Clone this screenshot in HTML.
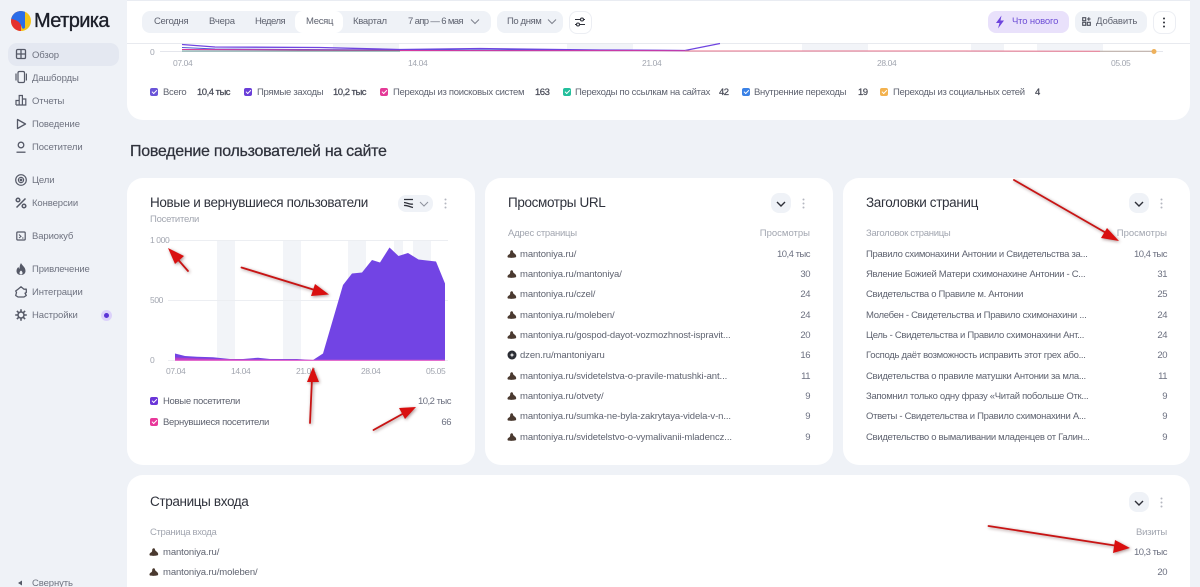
<!DOCTYPE html>
<html lang="ru"><head><meta charset="utf-8"><title>Метрика</title>
<style>
html,body{margin:0;padding:0;width:1200px;height:587px;overflow:hidden;background:#eff2f7;font-family:"Liberation Sans",sans-serif;color:#3c3f4a}
#w{position:relative;width:1200px;height:587px;overflow:hidden;background:#eff2f7}
.t{position:absolute;white-space:nowrap;font-size:9.5px;line-height:14px;height:14px;margin-top:1px}
.r{text-align:right}
.card{position:absolute;background:#fff;border-radius:16px}
.g{color:#a2a6b0;letter-spacing:-.25px}
.a{font-size:8.5px;letter-spacing:-.4px}
.n{color:#5f6370;letter-spacing:-.3px}
.u{letter-spacing:-.1px}
.m{color:#6f7380;letter-spacing:-.1px}
.h{font-size:13.5px;line-height:18px;height:18px;color:#2f323c;letter-spacing:-.36px;margin-top:0}
.s{color:#6c7080;letter-spacing:-.5px}
.k{color:#4a4d59;letter-spacing:-.5px;-webkit-text-stroke:.25px #4a4d59;margin-top:2px}
.l{margin-top:2px}
.b{position:absolute;border-radius:8px}
svg{position:absolute;overflow:visible}
.cb{position:absolute;width:8px;height:8px;border-radius:2px}
.cb::after{content:"";position:absolute;left:2px;top:1.5px;width:3.5px;height:2px;border-left:1px solid #fff;border-bottom:1px solid #fff;transform:rotate(-45deg)}
.fav{position:absolute;width:10px;height:8px}
</style></head><body><div id="w">

<!-- sidebar -->
<svg style="left:11px;top:11px" width="20" height="20" viewBox="0 0 20 20"><defs><clipPath id="lc"><circle cx="10" cy="10" r="10"/></clipPath></defs><g clip-path="url(#lc)"><rect width="20" height="20" fill="#f5c518"/><rect width="10" height="20" fill="#e5312e"/><path d="M0 0H14V16C14 17 13 18 11 17C10 13 8 9 0 8Z" fill="#2b6de8"/><path d="M8 6H14V16C14 17.500 12.500 18 11.500 17.500C10.500 13 9.500 9.500 8 8Z" fill="#2b6de8"/></g></svg>
<div class="t" style="left:34px;top:9px;margin-top:0;font-size:20px;line-height:24px;height:24px;color:#1b1e28;-webkit-text-stroke:.35px #1b1e28;letter-spacing:-.6px">Метрика</div>
<div class="b" style="left:8px;top:43px;width:111px;height:23px;background:#e4e8f1;border-radius:9px"></div>

<svg style="left:14px;top:47px" width="14" height="14" viewBox="0 0 14 14" fill="none" stroke="#555967" stroke-width="1.3"><rect x="2.5" y="2.5" width="9" height="9" rx="1.3"/><path d="M7 2.5v9M2.5 7h9"/></svg>
<svg style="left:14px;top:70px" width="14" height="14" viewBox="0 0 14 14" fill="none" stroke="#555967" stroke-width="1.2"><rect x="4" y="1.5" width="6.5" height="11" rx="1.4"/><path d="M2 3.5v7M12.4 3.5v7"/></svg>
<svg style="left:14px;top:93px" width="14" height="14" viewBox="0 0 14 14" fill="none" stroke="#555967" stroke-width="1.2"><path d="M2 12V7.5H5.2V12M5.2 12V2.5H8.4V12M8.4 12V6H11.8V12H2"/></svg>
<svg style="left:14px;top:117px" width="14" height="14" viewBox="0 0 14 14" fill="none" stroke="#555967" stroke-width="1.3"><path d="M3.5 2.5L11.5 7L3.5 11.5Z" stroke-linejoin="round"/></svg>
<svg style="left:14px;top:140px" width="14" height="14" viewBox="0 0 14 14" fill="none" stroke="#555967" stroke-width="1.3"><circle cx="7" cy="5" r="2.8"/><path d="M2.5 12.2h9"/></svg>
<svg style="left:14px;top:173px" width="14" height="14" viewBox="0 0 14 14" fill="none" stroke="#555967" stroke-width="1.2"><circle cx="7" cy="7" r="5.3"/><circle cx="7" cy="7" r="2.6"/><circle cx="7" cy="7" r=".8" fill="#555967"/></svg>
<svg style="left:14px;top:196px" width="14" height="14" viewBox="0 0 14 14" fill="none" stroke="#555967" stroke-width="1.5"><circle cx="4" cy="4" r="1.8"/><circle cx="10" cy="10" r="1.8"/><path d="M11.5 2.5L2.5 11.5"/></svg>
<svg style="left:14px;top:229px" width="14" height="14" viewBox="0 0 14 14" fill="none" stroke="#555967" stroke-width="1.2"><rect x="2.8" y="3" width="8.4" height="8" rx="1"/><path d="M5 5.5L7 7.5L5 9M8 9h1.5" stroke-width="1"/></svg>
<svg style="left:14px;top:262px" width="14" height="14" viewBox="0 0 14 14" fill="#555967"><path d="M7 1C8 3.5 11.5 5 11.5 9C11.5 11.5 9.5 13 7 13C4.5 13 2.5 11.5 2.5 9C2.5 7 3.5 5.800 4.500 5C4.700 6 5 6.500 5.500 6.700C5.500 4.500 6 2.500 7 1Z"/><path d="M7 8.500C8 9.500 8.500 10 8.500 11C8.500 12 7.800 12.500 7 12.500C6.200 12.500 5.500 12 5.500 11C5.500 10 6 9.500 7 8.500Z" fill="#eff2f7"/></svg>
<svg style="left:14px;top:285px" width="14" height="14" viewBox="0 0 14 14" fill="none" stroke="#555967" stroke-width="1.3"><path d="M7 1.800L10 4.200H12.300V7.500L11 8.200L12.300 10.500L10 12H4L1.700 10.500L2.500 7.500L1.700 6L4 4.200Z" stroke-linejoin="round"/></svg>
<svg style="left:14px;top:308px" width="14" height="14" viewBox="0 0 14 14" fill="none" stroke="#555967"><circle cx="7" cy="7" r="3" stroke-width="1.5"/><path d="M7 1.200v2.500M7 10.300v2.500M1.200 7h2.500M10.300 7h2.500M2.900 2.900l1.800 1.800M9.300 9.300l1.800 1.800M2.900 11.100l1.800-1.800M9.300 4.700l1.800-1.800" stroke-width="1.600"/></svg>
<div style="position:absolute;left:101px;top:310px;width:11px;height:11px;border-radius:50%;background:#dcd2fa"></div>
<div style="position:absolute;left:104px;top:313px;width:5px;height:5px;border-radius:50%;background:#5b33d6"></div>
<svg style="left:17px;top:579px" width="7" height="8" viewBox="0 0 7 8" fill="#555967"><path d="M1 4L5 1.500V6.500Z"/></svg>

<div class="t m" style="left:32px;top:48px">Обзор</div>
<div class="t m" style="left:32px;top:71px">Дашборды</div>
<div class="t m" style="left:32px;top:94px">Отчеты</div>
<div class="t m" style="left:32px;top:117px">Поведение</div>
<div class="t m" style="left:32px;top:140px">Посетители</div>
<div class="t m" style="left:32px;top:173px">Цели</div>
<div class="t m" style="left:32px;top:196px">Конверсии</div>
<div class="t m" style="left:32px;top:229px">Вариокуб</div>
<div class="t m" style="left:32px;top:262px">Привлечение</div>
<div class="t m" style="left:32px;top:285px">Интеграции</div>
<div class="t m" style="left:32px;top:308px">Настройки</div>
<div class="t m" style="left:32px;top:576px">Свернуть</div>

<!-- top card -->
<div class="card" style="left:127px;top:-20px;width:1063px;height:140px"></div>
<div style="position:absolute;left:127px;top:0;width:1063px;height:1px;background:#e9ecf2"></div>
<div style="position:absolute;left:127px;top:43px;width:1063px;height:1px;background:#e8eaef"></div>

<div class="b" style="left:142px;top:11px;width:349px;height:22px;background:#eff2f7"></div>
<div class="b" style="left:295px;top:11px;width:48px;height:22px;background:#fff"></div>
<div class="t n" style="left:154px;top:14px">Сегодня</div>
<div class="t n" style="left:209px;top:14px;letter-spacing:-.2px">Вчера</div>
<div class="t n" style="left:255px;top:14px;letter-spacing:-.5px">Неделя</div>
<div class="t n" style="left:306px;top:14px">Месяц</div>
<div class="t n" style="left:353px;top:14px">Квартал</div>
<div class="t n" style="left:408px;top:14px;letter-spacing:-.65px">7 апр — 6 мая</div>
<svg style="left:470px;top:18px" width="10" height="7" fill="none" stroke="#7d818d" stroke-width="1"><path d="M1 1.500L5 5.500L9 1.500"/></svg>
<div class="b" style="left:497px;top:11px;width:66px;height:22px;background:#eff2f7"></div>
<div class="t n" style="left:507px;top:14px;letter-spacing:-.4px">По дням</div>
<svg style="left:547px;top:18px" width="10" height="7" fill="none" stroke="#7d818d" stroke-width="1"><path d="M1 1.500L5 5.500L9 1.500"/></svg>
<div class="b" style="left:569px;top:11px;width:21px;height:21px;border:1px solid #eceef3;background:#fff"></div>
<svg style="left:574px;top:16px" width="12" height="12" viewBox="0 0 12 12" fill="none" stroke="#2e3039" stroke-width="1.1"><path d="M1 3.500H6.500M9.500 3.500H11M1 8.500H2.500M5.500 8.500H11"/><circle cx="8" cy="3.500" r="1.500"/><circle cx="4" cy="8.500" r="1.500"/></svg>

<div class="b" style="left:988px;top:11px;width:81px;height:22px;background:#e9e1fb"></div>
<svg style="left:995px;top:15px" width="10" height="14" viewBox="0 0 10 14" fill="#6e45dd"><path d="M6.500 .5L1 8H4.500L3 13.500L9 5.500H5.500Z"/></svg>
<div class="t" style="left:1012px;top:14px;color:#6e4fd6;letter-spacing:-.15px">Что нового</div>
<div class="b" style="left:1075px;top:11px;width:72px;height:22px;background:#eff2f7"></div>
<svg style="left:1082px;top:17px" width="9" height="9" viewBox="0 0 9 9" fill="none" stroke="#4a4d59" stroke-width="1.1"><rect x=".7" y=".7" width="3" height="3"/><rect x=".7" y="5.300" width="3" height="3"/><rect x="5.300" y="5.300" width="3" height="3"/><path d="M6.800 .3v3.500M5 2h3.600"/></svg>
<div class="t n" style="left:1096px;top:14px;letter-spacing:-.1px">Добавить</div>
<div class="b" style="left:1153px;top:11px;width:21px;height:21px;border:1px solid #eceef3;background:#fff"></div>
<svg style="left:1162px;top:17px" width="4" height="11" fill="#2e3039"><circle cx="2" cy="1.500" r="1"/><circle cx="2" cy="5.500" r="1"/><circle cx="2" cy="9.500" r="1"/></svg>

<svg style="left:0;top:0" width="1200" height="70" viewBox="0 0 1200 70" fill="none">
<g fill="#f2f4f8"><rect x="333" y="44" width="66" height="8"/><rect x="567" y="44" width="66" height="8"/><rect x="802" y="44" width="66" height="8"/><rect x="971" y="44" width="33" height="8"/><rect x="1037" y="44" width="66" height="8"/></g>
<path d="M160 51.500H1163" stroke="#e4e6ec"/>
<path d="M182 47.500L215 49L400 50L560 50L685 50.500" stroke="#4f5bd5" stroke-width="1"/>
<path d="M182 44.500L215 47L320 47.500L400 49.500L480 48.500L600 50L685 50.500L720 43.500" stroke="#6f45e0" stroke-width="1.300"/>
<path d="M182 49.500L300 50L400 50.500L685 50.700" stroke="#d6399f" stroke-width="1"/>
<path d="M182 51H400" stroke="#3a7f7a" stroke-width=".8"/>
<path d="M685 51H960L1100 51.300" stroke="#e8718a" stroke-width="1"/>
<path d="M1100 51.300H1154" stroke="#b9a9a0" stroke-width="1"/>
<circle cx="1154" cy="51.500" r="2.500" fill="#eeb15c"/>
</svg>
<div class="t g a" style="left:150px;top:44px">0</div>
<div class="t g a" style="left:173px;top:55px">07.04</div>
<div class="t g a" style="left:408px;top:55px">14.04</div>
<div class="t g a" style="left:642px;top:55px">21.04</div>
<div class="t g a" style="left:877px;top:55px">28.04</div>
<div class="t g a" style="left:1111px;top:55px">05.05</div>

<div class="cb" style="left:150px;top:88px;background:#6a55d8"></div>
<div class="t n l" style="left:163px;top:84px">Всего</div>
<div class="t k" style="left:197px;top:84px">10,4 тыс</div>
<div class="cb" style="left:244px;top:88px;background:#6a3ed8"></div>
<div class="t n l" style="left:257px;top:84px">Прямые заходы</div>
<div class="t k" style="left:333px;top:84px">10,2 тыс</div>
<div class="cb" style="left:380px;top:88px;background:#e43a97"></div>
<div class="t n l" style="left:393px;top:84px">Переходы из поисковых систем</div>
<div class="t k" style="left:535px;top:84px">163</div>
<div class="cb" style="left:563px;top:88px;background:#23bf9c"></div>
<div class="t n l" style="left:575px;top:84px">Переходы по ссылкам на сайтах</div>
<div class="t k" style="left:719px;top:84px">42</div>
<div class="cb" style="left:742px;top:88px;background:#3b82e6"></div>
<div class="t n l" style="left:754px;top:84px">Внутренние переходы</div>
<div class="t k" style="left:858px;top:84px">19</div>
<div class="cb" style="left:880px;top:88px;background:#f3b24f"></div>
<div class="t n l" style="left:893px;top:84px">Переходы из социальных сетей</div>
<div class="t k" style="left:1035px;top:84px">4</div>

<div class="t" style="left:130px;top:141px;font-size:16px;line-height:20px;height:20px;color:#2f323c;-webkit-text-stroke:.25px #2f323c;letter-spacing:-.28px">Поведение пользователей на сайте</div>

<!-- card 1 -->
<div class="card" style="left:127px;top:178px;width:348px;height:287px"></div>
<div class="t h" style="left:150px;top:194px">Новые и вернувшиеся пользователи</div>
<div class="t g" style="left:150px;top:212px">Посетители</div>
<div class="b" style="left:398px;top:195px;width:35px;height:17px;background:#eff2f7"></div>
<svg style="left:403px;top:198px" width="11" height="11" viewBox="0 0 11 11" fill="none" stroke="#2e3039" stroke-width="1.300"><path d="M1 1.500H10M1 4.500C4 4.500 7 7 10 6M1 7.500C4 7 7 9 10 9.500"/></svg>
<svg style="left:419px;top:201px" width="10" height="6" fill="none" stroke="#8d919c" stroke-width="1"><path d="M1 1L5 5L9 1"/></svg>
<svg style="left:444px;top:198px" width="3" height="11" fill="#b4b7c0"><circle cx="1.500" cy="1.500" r="1"/><circle cx="1.500" cy="5.500" r="1"/><circle cx="1.500" cy="9.500" r="1"/></svg>
<svg style="left:0;top:0" width="1200" height="587" viewBox="0 0 1200 587" fill="none">
<g fill="#f2f4f8"><rect x="217" y="240" width="18" height="120"/><rect x="283" y="240" width="18" height="120"/><rect x="348" y="240" width="18" height="120"/><rect x="394" y="240" width="9" height="120"/><rect x="413" y="240" width="18" height="120"/></g>
<path d="M168 240.500H448M168 300.500H448M168 360.500H448" stroke="#eceef2"/>
<path d="M175 353.500L185 356L197 356.700L213 357.300L230 359L243 359L258 357.700L270 359L297 359L313 360L323 353.500L343 285L352 273.500L362 272.500L372 260L380 262.500L389.500 247.500L398.500 256L408 253L418.500 259.500L427 260.500L436 261.500L445 283.500V360H175Z" fill="#7244e4"/>
<path d="M175 357.500L200 358.500L250 359.500L313 360V360H175Z" fill="#b43fc8"/>
<path d="M175 360.300H445" stroke="#e25bc8" stroke-width="1.200"/>
</svg>
<div class="t g a" style="left:150px;top:232px">1 000</div>
<div class="t g a" style="left:150px;top:292px">500</div>
<div class="t g a" style="left:150px;top:352px">0</div>
<div class="t g a" style="left:166px;top:363px">07.04</div>
<div class="t g a" style="left:231px;top:363px">14.04</div>
<div class="t g a" style="left:296px;top:363px">21.04</div>
<div class="t g a" style="left:361px;top:363px">28.04</div>
<div class="t g a" style="left:426px;top:363px">05.05</div>
<div class="cb" style="left:150px;top:397px;background:#6a35d8"></div>
<div class="t n" style="left:163px;top:394px">Новые посетители</div>
<div class="t s r" style="right:749px;top:394px">10,2 тыс</div>
<div class="cb" style="left:150px;top:418px;background:#e8389a"></div>
<div class="t n" style="left:163px;top:415px">Вернувшиеся посетители</div>
<div class="t s r" style="right:749px;top:415px">66</div>

<!-- card 2 -->
<div class="card" style="left:485px;top:178px;width:348px;height:287px"></div>
<div class="t h" style="left:508px;top:194px">Просмотры URL</div>
<div class="b" style="left:771px;top:193px;width:20px;height:20px;background:#eff2f7"></div>
<svg style="left:776px;top:201px" width="10" height="6" fill="none" stroke="#2e3039" stroke-width="1.400"><path d="M1 1L5 5L9 1"/></svg>
<svg style="left:802px;top:198px" width="3" height="11" fill="#b4b7c0"><circle cx="1.500" cy="1.500" r="1"/><circle cx="1.500" cy="5.500" r="1"/><circle cx="1.500" cy="9.500" r="1"/></svg>
<div class="t g" style="left:508px;top:226px">Адрес страницы</div>
<div class="t g r" style="right:390px;top:226px;letter-spacing:0">Просмотры</div>

<svg width="0" height="0" style="position:absolute"><defs><path id="f" d="M4 0.500C5 0 6 .5 6 1.500C6 2.300 6.500 2.800 7.500 3.500C9 4.500 9.500 6 9 7C8 8 2 8 1 7.500C0 7 .5 5 2 4.500C3 4 3.200 3 3.200 2C3.200 1.300 3.500 .8 4 .5Z" fill="#4a3a30"/></defs></svg>

<svg class="fav" style="left:507px;top:250px"><use href="#f"/></svg><div class="t n u" style="left:520px;top:247px">mantoniya.ru/</div><div class="t s r" style="right:390px;top:247px">10,4 тыс</div>
<svg class="fav" style="left:507px;top:270px"><use href="#f"/></svg><div class="t n u" style="left:520px;top:267px">mantoniya.ru/mantoniya/</div><div class="t s r" style="right:390px;top:267px">30</div>
<svg class="fav" style="left:507px;top:291px"><use href="#f"/></svg><div class="t n u" style="left:520px;top:287px">mantoniya.ru/czel/</div><div class="t s r" style="right:390px;top:287px">24</div>
<svg class="fav" style="left:507px;top:311px"><use href="#f"/></svg><div class="t n u" style="left:520px;top:308px">mantoniya.ru/moleben/</div><div class="t s r" style="right:390px;top:308px">24</div>
<svg class="fav" style="left:507px;top:331px"><use href="#f"/></svg><div class="t n u" style="left:520px;top:328px">mantoniya.ru/gospod-dayot-vozmozhnost-ispravit...</div><div class="t s r" style="right:390px;top:328px">20</div>
<svg style="left:507px;top:350px" width="10" height="10" viewBox="0 0 10 10"><circle cx="5" cy="5" r="4.500" fill="#2a2c33"/><path d="M5 2.500L5.600 4.400L7.500 5L5.600 5.600L5 7.500L4.400 5.600L2.500 5L4.400 4.400Z" fill="#fff"/></svg><div class="t n u" style="left:520px;top:348px">dzen.ru/mantoniyaru</div><div class="t s r" style="right:390px;top:348px">16</div>
<svg class="fav" style="left:507px;top:372px"><use href="#f"/></svg><div class="t n u" style="left:520px;top:369px">mantoniya.ru/svidetelstva-o-pravile-matushki-ant...</div><div class="t s r" style="right:390px;top:369px">11</div>
<svg class="fav" style="left:507px;top:392px"><use href="#f"/></svg><div class="t n u" style="left:520px;top:389px">mantoniya.ru/otvety/</div><div class="t s r" style="right:390px;top:389px">9</div>
<svg class="fav" style="left:507px;top:413px"><use href="#f"/></svg><div class="t n u" style="left:520px;top:409px">mantoniya.ru/sumka-ne-byla-zakrytaya-videla-v-n...</div><div class="t s r" style="right:390px;top:409px">9</div>
<svg class="fav" style="left:507px;top:433px"><use href="#f"/></svg><div class="t n u" style="left:520px;top:430px">mantoniya.ru/svidetelstvo-o-vymalivanii-mladencz...</div><div class="t s r" style="right:390px;top:430px">9</div>

<!-- card 3 -->
<div class="card" style="left:843px;top:178px;width:347px;height:287px"></div>
<div class="t h" style="left:866px;top:194px">Заголовки страниц</div>
<div class="b" style="left:1129px;top:193px;width:20px;height:20px;background:#eff2f7"></div>
<svg style="left:1134px;top:201px" width="10" height="6" fill="none" stroke="#2e3039" stroke-width="1.400"><path d="M1 1L5 5L9 1"/></svg>
<svg style="left:1160px;top:198px" width="3" height="11" fill="#b4b7c0"><circle cx="1.500" cy="1.500" r="1"/><circle cx="1.500" cy="5.500" r="1"/><circle cx="1.500" cy="9.500" r="1"/></svg>
<div class="t g" style="left:866px;top:226px;letter-spacing:-.3px">Заголовок страницы</div>
<div class="t g r" style="right:33px;top:226px;letter-spacing:0">Просмотры</div>
<div class="t n" style="left:866px;top:247px">Правило схимонахини Антонии и Свидетельства за...</div><div class="t s r" style="right:33px;top:247px">10,4 тыс</div>
<div class="t n" style="left:866px;top:267px">Явление Божией Матери схимонахине Антонии - С...</div><div class="t s r" style="right:33px;top:267px">31</div>
<div class="t n" style="left:866px;top:287px">Свидетельства о Правиле м. Антонии</div><div class="t s r" style="right:33px;top:287px">25</div>
<div class="t n" style="left:866px;top:308px">Молебен - Свидетельства и Правило схимонахини ...</div><div class="t s r" style="right:33px;top:308px">24</div>
<div class="t n" style="left:866px;top:328px">Цель - Свидетельства и Правило схимонахини Ант...</div><div class="t s r" style="right:33px;top:328px">24</div>
<div class="t n" style="left:866px;top:348px">Господь даёт возможность исправить этот грех або...</div><div class="t s r" style="right:33px;top:348px">20</div>
<div class="t n" style="left:866px;top:369px">Свидетельства о правиле матушки Антонии за мла...</div><div class="t s r" style="right:33px;top:369px">11</div>
<div class="t n" style="left:866px;top:389px">Запомнил только одну фразу «Читай побольше Отк...</div><div class="t s r" style="right:33px;top:389px">9</div>
<div class="t n" style="left:866px;top:409px">Ответы - Свидетельства и Правило схимонахини А...</div><div class="t s r" style="right:33px;top:409px">9</div>
<div class="t n" style="left:866px;top:430px">Свидетельство о вымаливании младенцев от Галин...</div><div class="t s r" style="right:33px;top:430px">9</div>

<!-- card 4 -->
<div class="card" style="left:127px;top:475px;width:1063px;height:130px"></div>
<div class="t h" style="left:150px;top:493px">Страницы входа</div>
<div class="b" style="left:1129px;top:492px;width:20px;height:20px;background:#eff2f7"></div>
<svg style="left:1134px;top:500px" width="10" height="6" fill="none" stroke="#2e3039" stroke-width="1.400"><path d="M1 1L5 5L9 1"/></svg>
<svg style="left:1160px;top:497px" width="3" height="11" fill="#b4b7c0"><circle cx="1.500" cy="1.500" r="1"/><circle cx="1.500" cy="5.500" r="1"/><circle cx="1.500" cy="9.500" r="1"/></svg>
<div class="t g" style="left:150px;top:525px;letter-spacing:-.35px">Страница входа</div>
<div class="t g r" style="right:33px;top:525px">Визиты</div>
<svg class="fav" style="left:149px;top:548px"><use href="#f"/></svg><div class="t n u" style="left:163px;top:545px">mantoniya.ru/</div><div class="t s r" style="right:33px;top:545px">10,3 тыс</div>
<svg class="fav" style="left:149px;top:568px"><use href="#f"/></svg><div class="t n u" style="left:163px;top:565px">mantoniya.ru/moleben/</div><div class="t s r" style="right:33px;top:565px">20</div>

<!-- arrows -->
<svg style="left:0;top:0;filter:drop-shadow(1px 1px 1.500px rgba(60,0,0,.45))" width="1200" height="587" viewBox="0 0 1200 587">
<g fill="#d90f0f" stroke="#c81414" stroke-width="1.800" stroke-linecap="round">
<path d="M1014 180L1108 234"/><path stroke="none" d="M1119 241L1101 238L1107 228Z"/>
<path d="M241.500 267.500L318 291"/><path stroke="none" d="M329 294.500L311 296L315 284Z"/>
<path d="M188 271L174 255"/><path stroke="none" d="M168 248L184 256L175 264Z"/>
<path d="M310 423L312 378"/><path stroke="none" d="M313 367L319 382L307 382Z"/>
<path d="M373.500 430L406 412"/><path stroke="none" d="M416 407L405 419L399 408Z"/>
<path d="M988.500 526L1118 546"/><path stroke="none" d="M1130 548L1113 553L1115 540Z"/>
</g></svg>
</div></body></html>
